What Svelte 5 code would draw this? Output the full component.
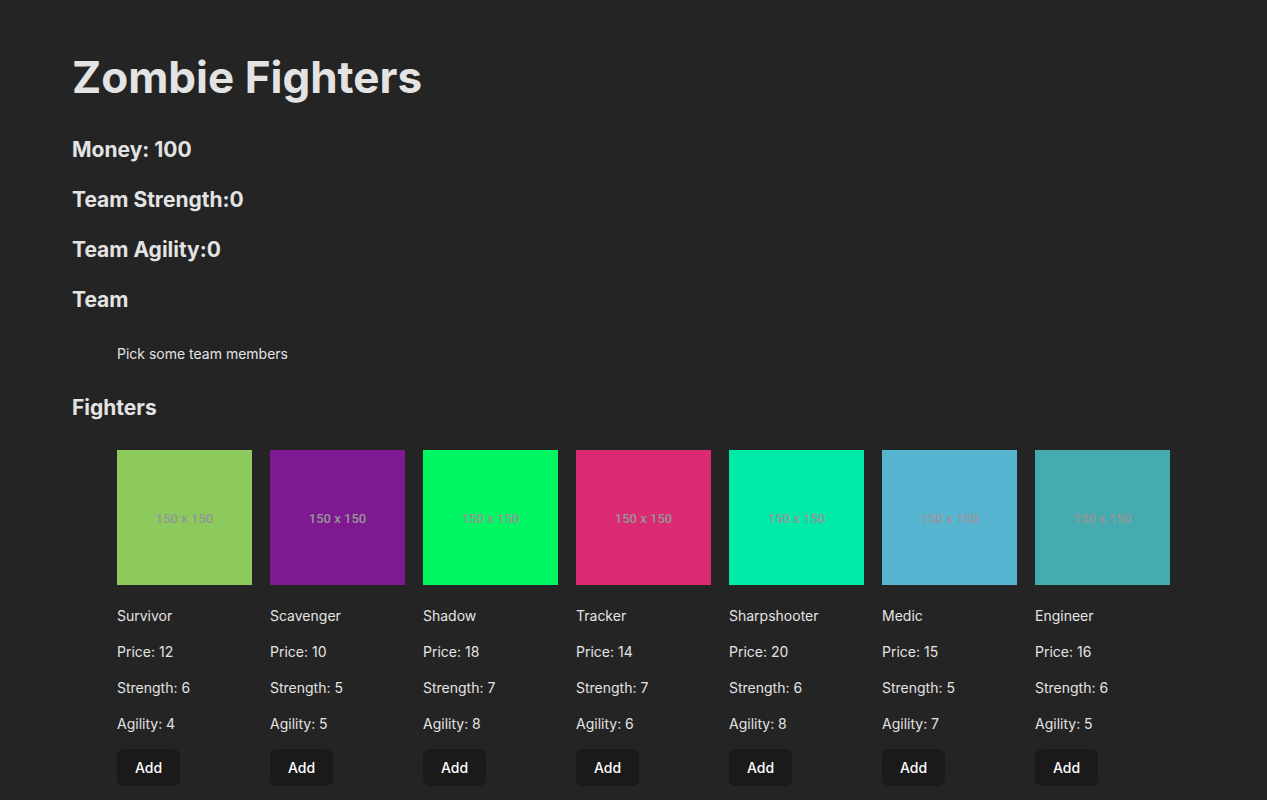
<script>
  const fighters = [
    { name: 'Survivor', price: 12, strength: 6, agility: 4, color: '#8cca5e' },
    { name: 'Scavenger', price: 10, strength: 5, agility: 5, color: '#7f1991' },
    { name: 'Shadow', price: 18, strength: 7, agility: 8, color: '#00f763' },
    { name: 'Tracker', price: 14, strength: 7, agility: 6, color: '#dc2973' },
    { name: 'Sharpshooter', price: 20, strength: 6, agility: 8, color: '#00ebaa' },
    { name: 'Medic', price: 15, strength: 5, agility: 7, color: '#58b5d1' },
    { name: 'Engineer', price: 16, strength: 6, agility: 5, color: '#45abb1' }
  ];

  let money = $state(100);
  let team = $state([]);
  let strength = $derived(team.reduce((sum, f) => sum + f.strength, 0));
  let agility = $derived(team.reduce((sum, f) => sum + f.agility, 0));

  function add(fighter) {
    if (money < fighter.price) return;
    money -= fighter.price;
    team.push(fighter);
  }
</script>

<main>
  <h1>Zombie Fighters</h1>
  <h2>Money: {money}</h2>
  <h2>Team Strength:{strength}</h2>
  <h2>Team Agility:{agility}</h2>
  <h2>Team</h2>
  {#if team.length === 0}
    <p class="empty">Pick some team members</p>
  {:else}
    <ul>
      {#each team as member}
        <li><p>{member.name}</p></li>
      {/each}
    </ul>
  {/if}
  <h2>Fighters</h2>
  <ul>
    {#each fighters as fighter}
      <li>
        <div class="portrait" style:background-color={fighter.color}>150 x 150</div>
        <p>{fighter.name}</p>
        <p>Price: {fighter.price}</p>
        <p>Strength: {fighter.strength}</p>
        <p>Agility: {fighter.agility}</p>
        <button type="button" onclick={() => add(fighter)}>Add</button>
      </li>
    {/each}
  </ul>
</main>

<style>
  :global(body) {
    margin: 0;
    background: #242424;
  }
  main {
    padding: 48px 72px 29px;
    color: #e3e3e3;
    font: 400 14px/22px Inter, sans-serif;
  }
  h1 {
    margin: 0 0 28px;
    font-size: 44px;
    line-height: 58px;
    font-weight: 700;
  }
  h2 {
    margin: 0 0 18px;
    font-size: 21px;
    line-height: 32px;
    font-weight: 650;
  }
  p {
    margin: 14px 0;
  }
  .empty {
    margin: 27px 0;
    padding-left: 45px;
  }
  ul {
    display: flex;
    flex-wrap: wrap;
    gap: 18px;
    margin: 26px 0 0;
    padding-left: 45px;
    list-style: none;
  }
  .portrait {
    display: flex;
    align-items: center;
    justify-content: center;
    box-sizing: border-box;
    width: 135px;
    height: 135px;
    margin-bottom: 20px;
    padding-top: 3px;
    color: #969696;
    font-family: Roboto, sans-serif;
    font-size: 13px;
    font-weight: 500;
  }
  button {
    padding: 8px 17px;
    border: 1px solid transparent;
    border-radius: 7px;
    background: #1a1a1a;
    color: #fff;
    font: 500 14px/19px Inter, sans-serif;
    cursor: pointer;
  }
  button:hover {
    border-color: #646cff;
  }
</style>
